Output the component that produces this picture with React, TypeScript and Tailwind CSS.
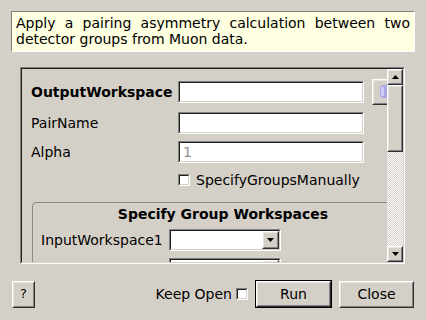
const sunkenOuter =
  "border border-t-[#808080] border-l-[#808080] border-b-white border-r-white";
const sunkenInner =
  "border border-t-[#202020] border-l-[#202020] border-b-[#d4d0c8] border-r-[#d4d0c8]";
const raisedOuter =
  "border border-t-white border-l-white border-b-[#303030] border-r-[#303030]";
const raisedInner =
  "border border-t-[#e8e6e1] border-l-[#e8e6e1] border-b-[#808080] border-r-[#808080]";

function Field({ width, value }: { width: string; value?: string }) {
  return (
    <div className={`${sunkenOuter} ${width} h-[22px] shrink-0`}>
      <div className={`${sunkenInner} h-full bg-white px-[3px] text-[#909090] leading-[18px]`}>
        {value}
      </div>
    </div>
  );
}

function Raised({
  className,
  children,
}: {
  className?: string;
  children?: React.ReactNode;
}) {
  return (
    <div className={`${raisedOuter} ${className ?? ""} bg-[#d4d0c8]`}>
      <div className={`${raisedInner} h-full w-full flex items-center justify-center`}>
        {children}
      </div>
    </div>
  );
}

function Arrow({ up }: { up?: boolean }) {
  return (
    <svg width="7" height="4" viewBox="0 0 7 4">
      <path d={up ? "M0 4 L3.5 0 L7 4 Z" : "M0 0 L7 0 L3.5 4 Z"} fill="#000" />
    </svg>
  );
}

function Combo() {
  return (
    <div className={`${sunkenOuter} w-[112px] h-[22px] shrink-0`}>
      <div className={`${sunkenInner} h-full bg-white flex justify-end`}>
        <Raised className="w-[17px] h-full">
          <Arrow />
        </Raised>
      </div>
    </div>
  );
}

function CheckBox() {
  return (
    <div className={`${sunkenOuter} w-[12px] h-[12px] shrink-0`}>
      <div className={`${sunkenInner} h-full bg-white`} />
    </div>
  );
}

export default function App() {
  return (
    <div
      className="w-[426px] h-[320px] bg-[#d4d0c8] text-[14px] text-black flex flex-col overflow-hidden"
      style={{ fontFamily: '"DejaVu Sans", sans-serif' }}
    >
      <div className="mx-[11px] mt-[11px] h-[41px] border border-t-[#808080] border-l-[#808080] border-b-white border-r-white bg-[#ffffe1] px-[4px] pt-[3px] leading-[16px] text-justify [text-align-last:left]">
        Apply a pairing asymmetry calculation between two detector groups from Muon data.
      </div>

      <div className={`${sunkenOuter} mt-[15px] ml-[20px] w-[385px] h-[197px]`}>
        <div className={`${sunkenInner} h-full flex`}>
          <div className="flex-1 min-w-0 overflow-hidden pt-[10px]">
            <div className="flex items-center h-[26px]">
              <span className="w-[156px] shrink-0 pl-[9px] font-bold">OutputWorkspace</span>
              <Field width="w-[186px]" />
              <Raised className="ml-[8px] w-[26px] h-[26px] shrink-0">
                <svg width="14" height="16" viewBox="0 0 14 16" className="ml-[2px]">
                  <rect x="1" y="1" width="11" height="13" rx="3" fill="#a9a8e6" />
                  <rect x="2" y="3" width="3" height="9" fill="#cfcef4" />
                  <rect x="9" y="10" width="4" height="5" fill="#2fa33b" />
                </svg>
              </Raised>
            </div>
            <div className="flex items-center h-[22px] mt-[7px]">
              <span className="w-[156px] shrink-0 pl-[9px]">PairName</span>
              <Field width="w-[186px]" />
            </div>
            <div className="flex items-center h-[22px] mt-[7px]">
              <span className="w-[156px] shrink-0 pl-[9px]">Alpha</span>
              <Field width="w-[186px]" value="1" />
            </div>
            <div className="flex items-center h-[22px] mt-[6px] pl-[156px]">
              <CheckBox />
              <span className="ml-[6px]">SpecifyGroupsManually</span>
            </div>
            <div className="mt-[11px] ml-[10px] w-[382px] border border-[#8a8a8a] rounded-[4px] pt-[3px] pb-[10px]">
              <div className="text-center font-bold leading-[16px]">Specify Group Workspaces</div>
              <div className="flex items-center h-[22px] mt-[7px]">
                <span className="w-[136px] shrink-0 pl-[8px]">InputWorkspace1</span>
                <Combo />
              </div>
              <div className="flex items-center h-[22px] mt-[7px]">
                <span className="w-[136px] shrink-0 pl-[8px]">InputWorkspace2</span>
                <Combo />
              </div>
            </div>
          </div>

          <div className="w-[16px] flex flex-col shrink-0">
            <Raised className="h-[16px]">
              <Arrow up />
            </Raised>
            <Raised className="h-[67px]" />
            <div className="flex-1 bg-[repeating-conic-gradient(#ffffff_0%_25%,#d4d0c8_0%_50%)] bg-[length:2px_2px]" />
            <Raised className="h-[16px]">
              <Arrow />
            </Raised>
          </div>
        </div>
      </div>

      <div className="mt-[16px] h-[28px] pl-[12px] pr-[12px] flex items-center">
        <Raised className="w-[23px] h-[27px]">
          <span className="text-[13px]">?</span>
        </Raised>
        <div className="ml-auto flex items-center">
          <span>Keep Open</span>
          <div className="ml-[4px]">
            <CheckBox />
          </div>
          <div className="ml-[7px] border border-black w-[77px] h-[28px]">
            <Raised className="w-full h-full">
              <span>Run</span>
            </Raised>
          </div>
          <Raised className="ml-[7px] w-[75px] h-[27px]">
            <span>Close</span>
          </Raised>
        </div>
      </div>
    </div>
  );
}
